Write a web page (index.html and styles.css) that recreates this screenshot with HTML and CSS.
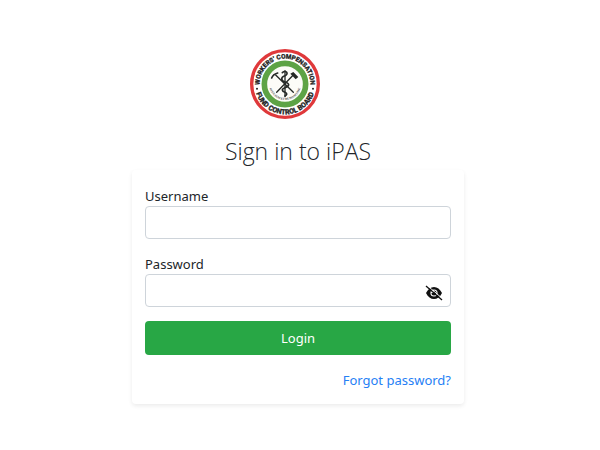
FILE: index.html
```html
<!DOCTYPE html>
<html lang="en">
<head>
<meta charset="utf-8">
<meta name="viewport" content="width=device-width, initial-scale=1">
<title>Sign in to iPAS</title>
<link rel="stylesheet" href="styles.css">
</head>
<body>
<main class="page">
  <svg class="logo" viewBox="0 0 210 210" role="img" aria-label="Workers' Compensation Fund Control Board">
    <defs>
      <path id="arc-top" d="M29 112V105A76 76 0 0 1 181 105V112"/>
      <path id="arc-bottom" d="M14 105A91 91 0 0 0 196 105"/>
      <path id="arc-motto" d="M57 105A48 48 0 0 0 153 105"/>
    </defs>
    <circle cx="105" cy="105" r="100" fill="#fff" stroke="#df393b" stroke-width="10"/>
    <circle cx="105" cy="105" r="62" fill="#fcfcf8" stroke="#5da345" stroke-width="17"/>
    <text class="ring-text"><textPath href="#arc-top" startOffset="50%">WORKERS’ COMPENSATION</textPath></text>
    <text class="ring-text ring-text-lower"><textPath href="#arc-bottom" startOffset="50%">FUND CONTROL BOARD</textPath></text>
    <circle cx="21" cy="119" r="3" fill="#222"/>
    <circle cx="189" cy="119" r="3" fill="#222"/>
    <text class="motto"><textPath href="#arc-motto" startOffset="50%">OFFICIUM ET HUMANITATE</textPath></text>
    <g fill="none" stroke="#252927" stroke-linecap="round">
      <path stroke-width="4" d="M77 78L130 130M132 76L80 130"/>
      <path stroke-width="5" d="M65 87Q69 76 83 72"/>
      <path stroke-width="4" d="M105 65V143"/>
      <path stroke-width="5" d="M97 71C108 61 118 75 105 80C90 85 94 96 105 99C121 104 118 112 105 116C93 120 96 127 105 130C113 133 111 138 105 141"/>
    </g>
    <path fill="#252927" d="M121 74L130 69L145 84L137 91Z"/>
  </svg>
  <h1 class="title">Sign in to iPAS</h1>
  <form class="card">
    <div class="field">
      <label for="username">Username</label>
      <input id="username" type="text" autocomplete="username">
    </div>
    <div class="field">
      <label for="password">Password</label>
      <div class="password">
        <input id="password" type="password" autocomplete="current-password">
        <button class="reveal" type="button" aria-label="Show password">
          <svg viewBox="0 0 18 16" aria-hidden="true">
            <path fill="#111" fill-rule="evenodd" d="M1 8C3 4 5.800 2 9 2S15 4 17 8C15 12 12.200 14 9 14S3 12 1 8ZM9 4.400A3.600 3.600 0 1 0 9 11.600A3.600 3.600 0 1 0 9 4.400Z"/>
            <path fill="#111" d="M9 5.500A2.500 2.500 0 1 1 6.500 8L8.500 8Z"/>
            <path fill="none" stroke="#fff" stroke-width="1" d="M2 .4L18 14"/>
            <path fill="none" stroke="#111" stroke-width="1.300" d="M1 1L17 15"/>
          </svg>
        </button>
      </div>
    </div>
    <button class="login" type="submit">Login</button>
    <a class="forgot" href="#">Forgot password?</a>
  </form>
</main>
</body>
</html>
```
FILE: styles.css
```css
* {
  box-sizing: border-box;
}

body {
  margin: 0;
  background: #fff;
  color: #212529;
  font: 13px/20px "Noto Sans", "Open Sans", sans-serif;
}

.page {
  display: flex;
  flex-direction: column;
  align-items: center;
  padding: 49px 16px 16px 12px;
}

.logo {
  width: 70px;
  height: 70px;
  margin-right: 26px;
}

.ring-text {
  font: bold 19px Roboto, "Liberation Sans", sans-serif;
  text-anchor: middle;
  fill: #222;
  stroke: #222;
  stroke-width: 1px;
}

.ring-text-lower {
  font-size: 21px;
}

.motto {
  font: bold 9px "Liberation Serif", serif;
  text-anchor: middle;
  fill: #444;
}

.title {
  margin: 17px 0 4px;
  font: 300 23px/30px "Open Sans", "Noto Sans", sans-serif;
}

.card {
  display: flex;
  flex-direction: column;
  width: 100%;
  max-width: 332px;
  padding: 16px 13px 14px;
  border-radius: 4px;
  box-shadow: 0 2px 4px rgba(0, 0, 0, 0.08);
}

.field {
  margin-bottom: 14px;
}

.field:first-child {
  margin-bottom: 15px;
}

.field label {
  display: block;
}

.field input {
  display: block;
  width: 100%;
  height: 33px;
  padding: 4px 12px;
  border: 1px solid #ced4da;
  border-radius: 4px;
  background: #fff;
  color: inherit;
  font: inherit;
}

.password {
  position: relative;
}

.field .password input {
  padding-right: 36px;
}

.reveal {
  position: absolute;
  top: 0;
  right: 8px;
  display: flex;
  align-items: center;
  height: 100%;
  padding: 4px 0 0;
  border: 0;
  background: none;
}

.reveal svg {
  width: 18px;
  height: 16px;
}

.login {
  height: 34px;
  padding: 0 12px;
  border: 0;
  border-radius: 4px;
  background: #28a745;
  color: #fff;
  font: inherit;
}

.forgot {
  align-self: flex-end;
  margin-top: 15px;
  color: #2680f5;
  text-decoration: none;
}
```
